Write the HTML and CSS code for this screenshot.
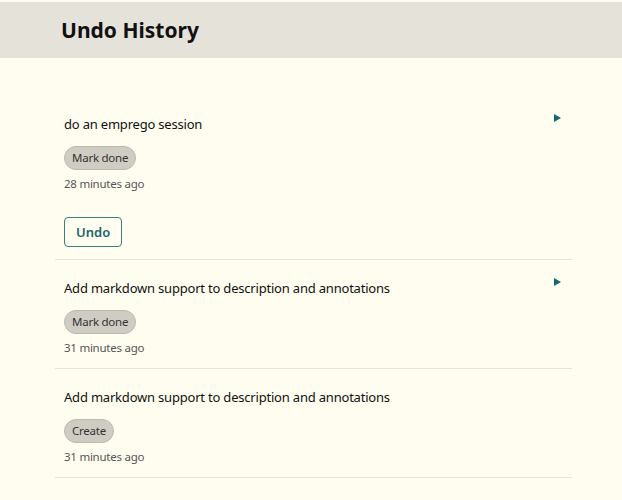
FILE: index.html
```html
<!DOCTYPE html>
<html lang="en">
<head>
    <meta charset="UTF-8">
    <meta name="viewport" content="width=device-width, initial-scale=1.0">
    <title>Undo History</title>
    <link rel="stylesheet" href="styles.css">
</head>
<body>
    <header class="page-header">
        <h1>Undo History</h1>
    </header>
    <main class="history">
        <!-- Ultima accion: se puede deshacer -->
        <div class="entry">
            <div class="entry-head">
                <span class="entry-title">do an emprego session</span>
                <svg class="entry-toggle" width="7" height="8" viewBox="0 0 7 8"><polygon points="0,0 7,4 0,8" fill="#17666c"/></svg>
            </div>
            <span class="chip">Mark done</span>
            <div class="entry-time">28 minutes ago</div>
            <button class="undo-btn">Undo</button>
        </div>
        <div class="entry">
            <div class="entry-head">
                <span class="entry-title">Add markdown support to description and annotations</span>
                <svg class="entry-toggle" width="7" height="8" viewBox="0 0 7 8"><polygon points="0,0 7,4 0,8" fill="#17666c"/></svg>
            </div>
            <span class="chip">Mark done</span>
            <div class="entry-time">31 minutes ago</div>
        </div>
        <div class="entry">
            <div class="entry-head">
                <span class="entry-title">Add markdown support to description and annotations</span>
            </div>
            <span class="chip">Create</span>
            <div class="entry-time">31 minutes ago</div>
        </div>
    </main>
</body>
</html>
```

FILE: styles.css
```css
body {
    margin: 0;
    padding-top: 2px;
    background: #fffdf0;
    font-family: "Noto Sans", sans-serif;
    color: #111;
}
.page-header {
    background: #e5e3d9;
    height: 56px;
    display: flex;
    align-items: center;
    padding-left: 61px;
}
.page-header h1 {
    margin: 0;
    font-size: 21px;
    font-weight: 700;
}
.history {
    margin: 38px 50px 0 55px;
}
.entry {
    padding: 18px 0 12px 9px;
    border-bottom: 1px solid #e6e4d8;
}
.entry-head {
    display: flex;
    justify-content: space-between;
    align-items: flex-start;
}
.entry-title {
    font-size: 13px;
    line-height: 20px;
    letter-spacing: -0.2px;
}
.entry-toggle {
    margin: 0 11px 0 0;
}
.chip {
    display: inline-block;
    margin-top: 12px;
    padding: 0 7px;
    height: 22px;
    line-height: 22px;
    font-size: 11.5px;
    letter-spacing: -0.25px;
    color: #333;
    background: #cfcdc3;
    border: 1px solid #bcbab0;
    border-radius: 12px;
    vertical-align: top;
}
.entry-time {
    margin-top: 6px;
    font-size: 11.5px;
    line-height: 16px;
    letter-spacing: -0.25px;
    color: #555;
}
.undo-btn {
    display: block;
    margin-top: 25px;
    height: 30px;
    padding: 0 11px;
    font-family: "Noto Sans", sans-serif;
    font-size: 13px;
    font-weight: 600;
    color: #17666c;
    background: transparent;
    border: 1px solid #3a7e82;
    border-radius: 4px;
}
```
